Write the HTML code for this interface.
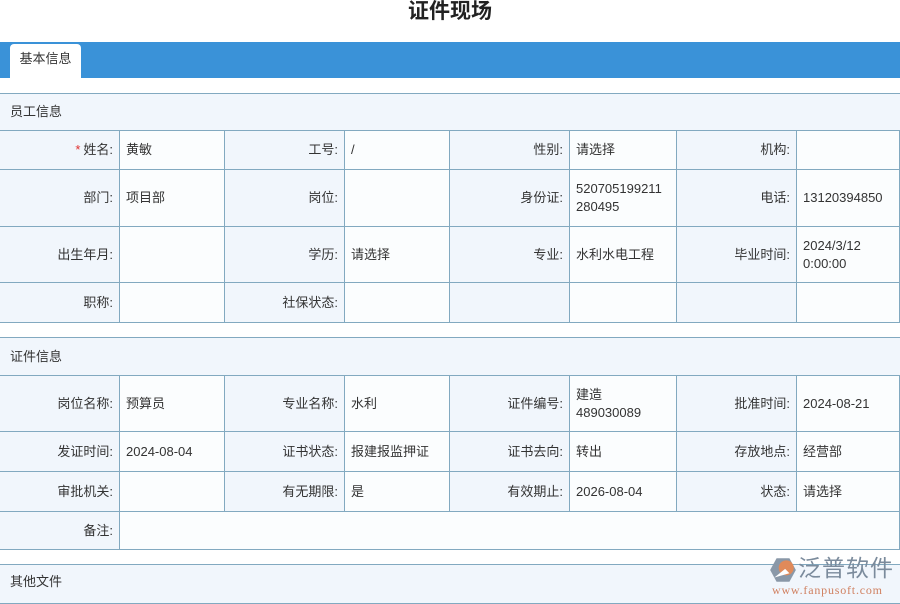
<!DOCTYPE html>
<html><head><meta charset="utf-8"><style>
body{margin:0;width:900px;height:600px;overflow:hidden;background:#fff;font-family:"Liberation Sans","Noto Sans CJK SC",sans-serif;font-size:13px;color:#333;position:relative}
.t{position:absolute;left:0;width:900px;text-align:center;font-size:21px;font-weight:bold;line-height:24px;top:0;color:#222}
.bar{position:absolute;left:0;top:42px;width:900px;height:36px;background:#3a92d8}
.tab{position:absolute;left:10px;top:44px;width:71px;height:34px;background:#fff;border-radius:4px 4px 0 0;text-align:center;line-height:30px;font-size:13px}
.c{position:absolute;box-sizing:border-box;border-right:1px solid #82a9c0;border-bottom:1px solid #82a9c0;display:flex;align-items:center;padding:0 6px;line-height:18px}
.l{background:#f1f6fc;justify-content:flex-end;padding-right:6px}
.v{background:#fbfdfe}
.h{position:absolute;left:0;width:900px;box-sizing:border-box;background:#f1f6fc;border-top:1px solid #82a9c0;border-bottom:1px solid #82a9c0;padding-left:10px;display:flex;align-items:center;padding-bottom:3px}
.r{color:#e03030;margin-right:3px}
</style></head><body>
<div class="t">证件现场</div>
<div class="bar"></div><div class="tab">基本信息</div>
<div class="h" style="top:93px;height:38px">员工信息</div>
<div id="g"></div>
<div class="h" style="top:337px;height:39px">证件信息</div>
<div class="h" style="top:564px;height:40px;padding-bottom:8px">其他文件</div>
<div style="position:absolute;left:768px;top:553px;width:130px;height:45px">
<svg width="30" height="28" viewBox="0 0 28 26" style="position:absolute;left:0;top:3px"><path d="M8 2 L20 2 L26 13 L20 24 L8 24 L2 13Z" fill="#8a98a8"/><circle cx="17" cy="11" r="7" fill="#e08a5a"/><path d="M6 20 L16 12 L20 16Z" fill="#fff"/></svg>
<div style="position:absolute;left:30px;top:0;font-size:23px;color:#7b8b9c;letter-spacing:1px;line-height:30px">泛普软件</div>
<div style="position:absolute;left:4px;top:30px;font-size:12px;color:#d08060;font-family:'Liberation Serif',serif;letter-spacing:.8px">www.fanpusoft.com</div>
</div>
<script>
var X=[0,120,225,345,450,570,677,797,900];
var rows=[
[131,170,[["<span class=r>*</span>姓名:","黄敏"],["工号:","/"],["性别:","请选择"],["机构:",""]]],
[170,227,[["部门:","项目部"],["岗位:",""],["身份证:","520705199211<br>280495"],["电话:","13120394850"]]],
[227,283,[["出生年月:",""],["学历:","请选择"],["专业:","水利水电工程"],["毕业时间:","2024/3/12<br>0:00:00"]]],
[283,323,[["职称:",""],["社保状态:",""],["",""],["",""]]],
[376,432,[["岗位名称:","预算员"],["专业名称:","水利"],["证件编号:","建造<br>489030089"],["批准时间:","2024-08-21"]]],
[432,472,[["发证时间:","2024-08-04"],["证书状态:","报建报监押证"],["证书去向:","转出"],["存放地点:","经营部"]]],
[472,512,[["审批机关:",""],["有无期限:","是"],["有效期止:","2026-08-04"],["状态:","请选择"]]]
];
var h="";
rows.forEach(function(r){for(var i=0;i<4;i++){var a=X[2*i],b=X[2*i+1],c=X[2*i+2];
h+='<div class="c l" style="left:'+a+'px;top:'+r[0]+'px;width:'+(b-a)+'px;height:'+(r[1]-r[0])+'px">'+r[2][i][0]+'</div>';
h+='<div class="c v" style="left:'+b+'px;top:'+r[0]+'px;width:'+(c-b)+'px;height:'+(r[1]-r[0])+'px">'+r[2][i][1]+'</div>';}});
h+='<div class="c l" style="left:0;top:512px;width:120px;height:38px">备注:</div><div class="c v" style="left:120px;top:512px;width:780px;height:38px"></div>';
document.getElementById("g").innerHTML=h;
</script>
</body></html>
